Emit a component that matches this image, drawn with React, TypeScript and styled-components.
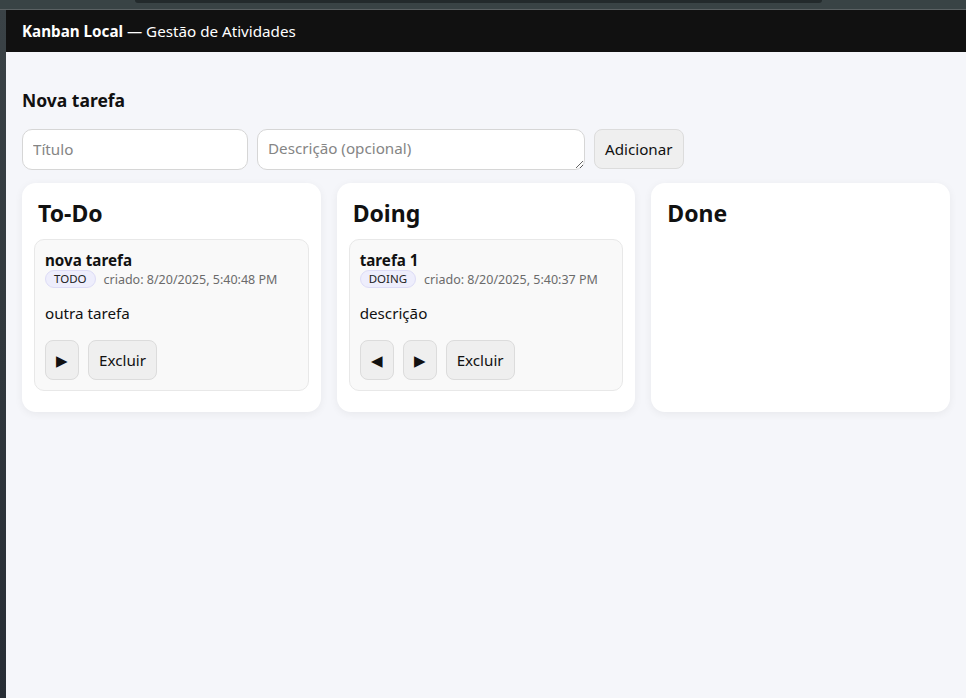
import React from "react";
import styled, { createGlobalStyle } from "styled-components";

const Global = createGlobalStyle`
  html, body { margin: 0; padding: 0; }
  body { font-family: "Noto Sans", "Open Sans", sans-serif; background: #2b3238; }
  * { box-sizing: border-box; }
`;

const Frame = styled.div`
  min-height: 100vh;
  display: grid;
  grid-template-columns: 6px 1fr;
  grid-template-rows: 10px 1fr;
`;

const ChromeTop = styled.div`
  grid-column: 1 / 3;
  background: #394345;
  border-bottom: 1px solid #5b6163;
  display: flex;
  align-items: flex-start;
`;

const ChromeTab = styled.div`
  margin-left: 135px;
  width: 687px;
  height: 3px;
  background: #232a2c;
  border-radius: 0 0 6px 6px;
`;

const ChromeSide = styled.div`
  background: linear-gradient(#3a4246, #272d35);
`;

const Page = styled.div`
  background: #f5f6fa;
  display: flex;
  flex-direction: column;
  color: #111;
`;

const Header = styled.header`
  background: #111;
  color: #fff;
  height: 42px;
  padding: 0 16px;
  display: flex;
  align-items: center;
  font-size: 15.2px;
  strong { font-weight: 700; }
`;

const Main = styled.main`
  padding: 16px;
`;

const SectionTitle = styled.h2`
  font-size: 17.5px;
  font-weight: 700;
  margin: 20px 0 17px;
`;

const Form = styled.form`
  display: flex;
  gap: 9px;
  margin-bottom: 13px;
`;

const TextInput = styled.input`
  width: 226px;
  height: 41px;
  padding: 0 10px 2px;
  border: 1px solid #d6d6d6;
  border-radius: 10px;
  background: #fff;
  font: inherit;
  font-size: 15.2px;
  color: #111;
  &::placeholder { color: #858585; }
`;

const TextArea = styled.textarea`
  width: 328px;
  height: 41px;
  padding: 8px 10px;
  border: 1px solid #d6d6d6;
  border-radius: 10px;
  background: #fff;
  font: inherit;
  font-size: 15.2px;
  color: #111;
  &::placeholder { color: #858585; }
`;

const Button = styled.button<{ $narrow?: boolean }>`
  height: 40px;
  padding: ${(p) => (p.$narrow ? "0" : "0 10px")};
  width: ${(p) => (p.$narrow ? "34px" : "auto")};
  border: 1px solid #dcdcdc;
  border-radius: 8px;
  background: #efefef;
  color: #111;
  font: inherit;
  font-size: 15.2px;
  cursor: pointer;
`;

const Board = styled.div`
  display: grid;
  grid-template-columns: repeat(3, 1fr);
  gap: 16px;
`;

const Column = styled.section`
  background: #fff;
  border-radius: 14px;
  box-shadow: 0 2px 8px rgba(0, 0, 0, 0.06);
  padding: 12px 12px 20px;
  min-height: 229px;
`;

const ColumnTitle = styled.h3`
  font-size: 23px;
  font-weight: 700;
  margin: 2px 4px 10px;
`;

const Card = styled.article`
  background: #f9f9f9;
  border: 1px solid #e8e8e8;
  border-radius: 10px;
  padding: 10px;
`;

const CardTitle = styled.div`
  font-weight: 700;
  font-size: 15.2px;
  line-height: 20px;
`;

const Meta = styled.div`
  display: flex;
  align-items: center;
  gap: 8px;
`;

const Badge = styled.span`
  font-size: 11.5px;
  line-height: 16px;
  padding: 0 8px;
  border-radius: 999px;
  background: #eeeefc;
  border: 1px solid #dddcf6;
  color: #222;
`;

const Created = styled.span`
  font-size: 12.5px;
  color: #6b6b6b;
`;

const Desc = styled.p`
  font-size: 15.2px;
  margin: 15px 0 17px;
`;

const Actions = styled.div`
  display: flex;
  gap: 9px;
`;

type Task = { title: string; status: string; created: string; desc: string; prev: boolean; next: boolean };

const columns: { name: string; tasks: Task[] }[] = [
  {
    name: "To-Do",
    tasks: [{ title: "nova tarefa", status: "TODO", created: "criado: 8/20/2025, 5:40:48 PM", desc: "outra tarefa", prev: false, next: true }],
  },
  {
    name: "Doing",
    tasks: [{ title: "tarefa 1", status: "DOING", created: "criado: 8/20/2025, 5:40:37 PM", desc: "descrição", prev: true, next: true }],
  },
  { name: "Done", tasks: [] },
];

export default function App() {
  return (
    <>
      <Global />
      <Frame>
        <ChromeTop>
          <ChromeTab />
        </ChromeTop>
        <ChromeSide />
        <Page>
          <Header>
            <span>
              <strong>Kanban Local</strong> — Gestão de Atividades
            </span>
          </Header>
          <Main>
            <SectionTitle>Nova tarefa</SectionTitle>
            <Form onSubmit={(e) => e.preventDefault()}>
              <TextInput placeholder="Título" />
              <TextArea placeholder="Descrição (opcional)" rows={1} />
              <Button type="submit">Adicionar</Button>
            </Form>
            <Board>
              {columns.map((c) => (
                <Column key={c.name}>
                  <ColumnTitle>{c.name}</ColumnTitle>
                  {c.tasks.map((t) => (
                    <Card key={t.title}>
                      <CardTitle>{t.title}</CardTitle>
                      <Meta>
                        <Badge>{t.status}</Badge>
                        <Created>{t.created}</Created>
                      </Meta>
                      <Desc>{t.desc}</Desc>
                      <Actions>
                        {t.prev && <Button $narrow>◀</Button>}
                        {t.next && <Button $narrow>▶</Button>}
                        <Button>Excluir</Button>
                      </Actions>
                    </Card>
                  ))}
                </Column>
              ))}
            </Board>
          </Main>
        </Page>
      </Frame>
    </>
  );
}
